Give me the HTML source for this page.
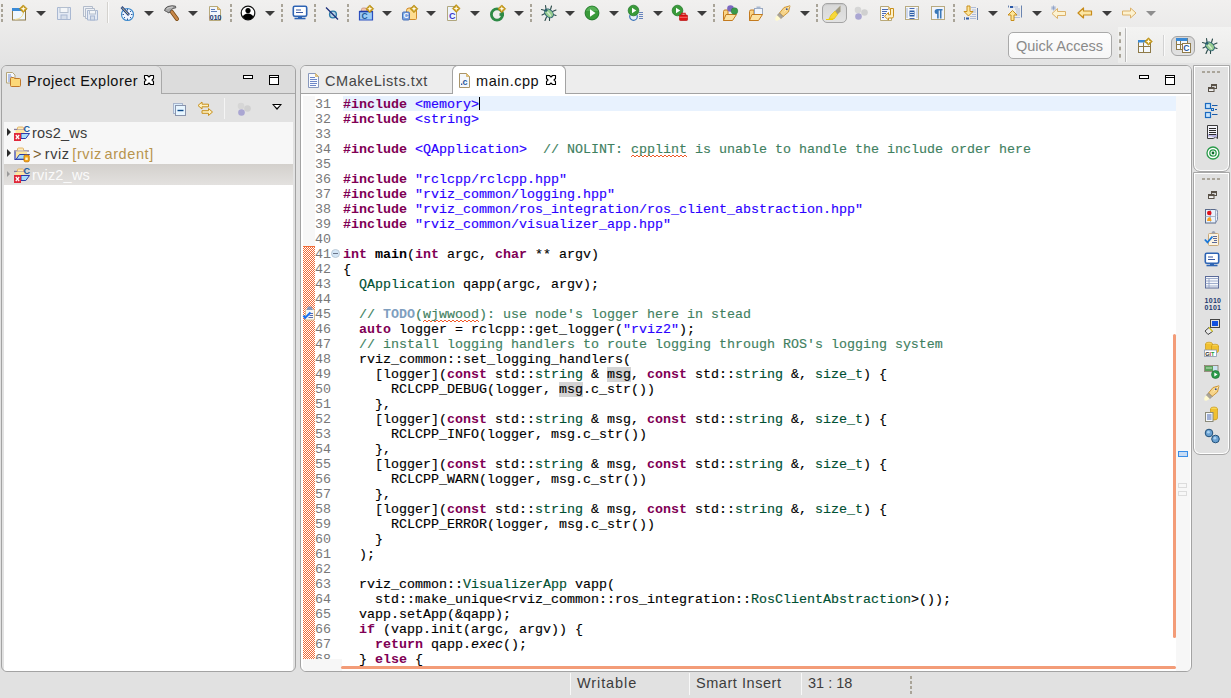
<!DOCTYPE html>
<html><head><meta charset="utf-8">
<style>
*{margin:0;padding:0;box-sizing:border-box}
html,body{width:1231px;height:698px;overflow:hidden}
body{position:relative;background:#e1e1e1;font-family:"Liberation Sans",sans-serif;color:#3c3c3c}
.abs{position:absolute}
.ic{position:absolute;overflow:visible}
.txt{position:absolute;font-size:14.5px;line-height:17px;white-space:pre}
#top{left:0;top:0;width:1231px;height:65px;background:linear-gradient(#f1f0ef,#e3e3e3)}
.panel{position:absolute;border:1px solid #a3a3a3;border-radius:6px;overflow:hidden}
#pe{left:1px;top:65px;width:295px;height:607px;background:#e2e2e2}
#ed{left:300px;top:65px;width:892px;height:607px;background:#fff}
.code{-webkit-text-stroke:0.15px currentColor;position:absolute;left:343px;top:97px;font-family:"Liberation Mono",monospace;font-size:13.333px;line-height:15px;white-space:pre;color:#000}
.ln{position:absolute;left:307px;top:97px;width:24px;height:562px;overflow:hidden;text-align:right;font-family:"Liberation Mono",monospace;font-size:13.333px;line-height:15px;white-space:pre;color:#787878}
.k{color:#7f0055;font-weight:bold;-webkit-text-stroke:0}
.s{color:#2a00ff}
.c{color:#3f7f5f}
.t{color:#005032}
.b{font-weight:bold;-webkit-text-stroke:0}
.i{font-style:italic}
.todo{color:#7f9fbf;font-weight:bold;-webkit-text-stroke:0}
.sp{display:inline-block;height:15px;vertical-align:top;background-image:linear-gradient(90deg,transparent 1px,#f05a28 1px 3px,transparent 3px),linear-gradient(90deg,#f05a28 1px,transparent 1px 3px,#f05a28 3px);background-size:4px 1px,4px 1px;background-position:0 13px,0 14px;background-repeat:repeat-x}
.mk{background:#d4d4d4;display:inline-block;height:15px;vertical-align:top}
.arr{position:absolute;width:0;height:0;border-left:5px solid transparent;border-right:5px solid transparent;border-top:5px solid #3c3c3c}
.dsep{position:absolute;width:2px;background-image:linear-gradient(#aaa59a 0 2px,transparent 2px)}
.min{position:absolute;width:10px;height:4px;border:1px solid #000;background:#fff}
.max{position:absolute;width:10px;height:10px;border:1px solid #000;background:linear-gradient(#fff 0 1px,#000 1px 2px,#fff 2px)}
.vm{position:absolute;width:0;height:0;border-left:5px solid transparent;border-right:5px solid transparent;border-top:6px solid #000}
.vm:after{content:"";position:absolute;left:-3px;top:-5px;border-left:3px solid transparent;border-right:3px solid transparent;border-top:3px solid #fff}
.tri{position:absolute;width:0;height:0;border-top:4px solid transparent;border-bottom:4px solid transparent;border-left:4px solid #2a2a2a}
.fold{position:absolute;width:9px;height:9px;border-radius:50%;border:1px solid #bccbd8;background:#d4e6f6}
.fold:after{content:"";position:absolute;left:1px;top:3px;width:5px;height:1px;background:#6a7488}
</style></head><body>
<div id="top" class="abs"></div>
<div class="dsep" style="left:1px;top:4px;height:18px;background-image:linear-gradient(#a9a498 0 3px,transparent 3px);background-size:2px 5px"></div>
<svg class="ic" style="left:11px;top:5px" width="16" height="16" viewBox="0 0 16 16"><rect x="1.5" y="3.5" width="13" height="11.5" fill="#eef7ff" stroke="#8e7a48"/><rect x="1" y="3" width="10" height="3" fill="#3a8ad6"/><path d="M4 14.5Q11 14 12.5 8" fill="none" stroke="#f3dc8a" stroke-width="1"/><path d="M12.3 -0.10000000000000009L16.2 3.8L12.3 7.699999999999999L8.4 3.8Z" fill="#c89a18" stroke="#b08810" stroke-width="0.6" stroke-linejoin="round"/><path d="M12.3 1.2L13.0 3.0999999999999996L14.899999999999999 3.8L13.0 4.5L12.3 6.3999999999999995L11.600000000000001 4.5L9.700000000000001 3.8L11.600000000000001 3.0999999999999996Z" fill="#fffbe8"/></svg>
<div class="arr" style="left:36px;top:11px;border-top-color:#3c3c3c"></div>
<svg class="ic" style="left:56px;top:5px" width="16" height="16" viewBox="0 0 16 16"><path d="M1.5 2.5h13v12h-13z" fill="#e4eaf4" stroke="#a9b8d2" stroke-linejoin="round"/><rect x="4" y="2.5" width="8" height="5" fill="#f4f6f8" stroke="#b4bfcf"/><rect x="5" y="10" width="6" height="4.5" fill="#d6deea" stroke="#a9b8d2"/></svg>
<svg class="ic" style="left:82px;top:5px" width="16" height="16" viewBox="0 0 16 16"><path d="M1.5 1.5h9v10h-9z" fill="#eef1f6" stroke="#b3bccb"/><path d="M3.5 3.5h9v10h-9z" fill="#eef1f6" stroke="#b3bccb"/><path d="M5.5 5.5h10v9.5h-10z" fill="#e4eaf4" stroke="#a9b8d2"/><rect x="7.5" y="5.5" width="6" height="3.5" fill="#f4f6f8" stroke="#b4bfcf"/><rect x="8.5" y="11" width="4" height="4" fill="#d6deea" stroke="#a9b8d2"/></svg>
<div class="abs" style="left:107px;top:2px;width:1px;height:21px;background:#d4d2ce"></div>
<div class="abs" style="left:108px;top:2px;width:1px;height:21px;background:#fbfbfb"></div>
<svg class="ic" style="left:119px;top:5px" width="16" height="16" viewBox="0 0 16 16"><circle cx="8.5" cy="9.5" r="6" fill="#eef5ff" stroke="#3a88cc" stroke-width="1.1"/><path d="M8.5 4v1.5M8.5 13.5v1.5M3.5 9.5H5M12 9.5h1.5M5 6l1 1M12 6l-1 1M5 13l1-1M12 13l-1-1" stroke="#1f4a8a" stroke-width="0.9"/><path d="M2.5 2L10 10" stroke="#1f3f86" stroke-width="2.6"/><path d="M3 2.5L9.5 9.5" stroke="#e8d88a" stroke-width="0.9"/></svg>
<div class="arr" style="left:144px;top:11px;border-top-color:#3c3c3c"></div>
<svg class="ic" style="left:163px;top:5px" width="16" height="16" viewBox="0 0 16 16"><path d="M8.5 6.5L14 14" stroke="#7a4a14" stroke-width="4" stroke-linecap="round"/><path d="M8.5 6.5L14 14" stroke="#c8884a" stroke-width="2.4" stroke-linecap="round"/><path d="M1.5 5.5Q2 2.5 5 1.5Q9 0.2 12.5 1.2L12.8 2.8Q9.5 3 8.3 4.8L6 8Q3.5 6.5 1.5 5.5Z" fill="#a8a8a8" stroke="#545454" stroke-width="1"/><path d="M4 3.5Q7 2 10 2" stroke="#d8d8d8" stroke-width="0.8" fill="none"/></svg>
<div class="arr" style="left:188px;top:11px;border-top-color:#3c3c3c"></div>
<svg class="ic" style="left:208px;top:5px" width="16" height="16" viewBox="0 0 16 16"><path d="M1.5 1.5h8l3 3v11h-11z" fill="#f2f6fc" stroke="#b7a97a"/><path d="M9.5 1.5v3h3" fill="#e9c77a" stroke="#c9a45c"/><path d="M3 4.5h4M3 6.5h6" stroke="#5c7ab8" stroke-width="1"/><text x="1.6" y="15" font-family="Liberation Sans" font-weight="bold" font-size="7.5" fill="#1c3c74" letter-spacing="-0.3">010</text></svg>
<div class="dsep" style="left:230px;top:4px;height:18px;background-image:linear-gradient(#a9a498 0 3px,transparent 3px);background-size:2px 5px"></div>
<svg class="ic" style="left:240px;top:5px" width="16" height="16" viewBox="0 0 16 16"><circle cx="8" cy="8" r="6.8" fill="#fff" stroke="#111" stroke-width="1.2"/><circle cx="8" cy="5.6" r="2.6" fill="#000"/><path d="M2.6 12Q4 8.5 8 8.5Q12 8.5 13.4 12Q11.5 14.8 8 14.8Q4.5 14.8 2.6 12Z" fill="#000"/></svg>
<div class="arr" style="left:265px;top:11px;border-top-color:#3c3c3c"></div>
<div class="dsep" style="left:281px;top:4px;height:18px;background-image:linear-gradient(#a9a498 0 3px,transparent 3px);background-size:2px 5px"></div>
<svg class="ic" style="left:292px;top:5px" width="16" height="16" viewBox="0 0 16 16"><rect x="1.3" y="1.3" width="13.4" height="10" rx="1.5" fill="#fff" stroke="#2e64b4" stroke-width="1.6"/><path d="M4 5h5M4 7.5h7" stroke="#3b5aa0" stroke-width="1.1"/><path d="M6 11.5h4v1.5h-4z" fill="#2e64b4"/><path d="M2.5 13.5h11" stroke="#2e64b4" stroke-width="1.6"/></svg>
<div class="dsep" style="left:314px;top:4px;height:18px;background-image:linear-gradient(#a9a498 0 3px,transparent 3px);background-size:2px 5px"></div>
<svg class="ic" style="left:324px;top:5px" width="16" height="16" viewBox="0 0 16 16"><circle cx="9" cy="9.5" r="3.4" fill="#b8d4e4" stroke="#2c7ba8" stroke-width="1.4"/><path d="M2 2.5L14 14.5" stroke="#1c2f7a" stroke-width="1.3"/></svg>
<div class="dsep" style="left:347px;top:4px;height:18px;background-image:linear-gradient(#a9a498 0 3px,transparent 3px);background-size:2px 5px"></div>
<svg class="ic" style="left:358px;top:5px" width="16" height="16" viewBox="0 0 16 16"><path d="M3.5 6V4.5q0-1.5 1.5-1.5h2q1.5 0 1.5 1.5V6" fill="#f4c8b0" stroke="#c89080" stroke-width="0.8"/><path d="M1.5 6.5h13v8.5h-13z" fill="#9cccf4" stroke="#2c50c0" stroke-width="1.2"/><path d="M1.5 6.5h13" stroke="#1c3ca8" stroke-width="1.6"/><text x="3.6" y="14" font-family="Liberation Sans" font-weight="bold" font-size="8.5" fill="#1c5a98">C</text><path d="M11.8 -0.10000000000000009L15.700000000000001 3.8L11.8 7.699999999999999L7.9 3.8Z" fill="#c89a18" stroke="#b08810" stroke-width="0.6" stroke-linejoin="round"/><path d="M11.8 1.2L12.5 3.0999999999999996L14.4 3.8L12.5 4.5L11.8 6.3999999999999995L11.100000000000001 4.5L9.200000000000001 3.8L11.100000000000001 3.0999999999999996Z" fill="#fffbe8"/></svg>
<div class="arr" style="left:382px;top:11px;border-top-color:#3c3c3c"></div>
<svg class="ic" style="left:402px;top:5px" width="16" height="16" viewBox="0 0 16 16"><path d="M4.5 5.5q0-2.5 2.5-2.5h2q1.5 0 2 1.5h2.5q1 0 1 1v8q0 1-1 1h-8q-1 0-1-1z" fill="#fddc90" stroke="#d08a2a"/><rect x="0.5" y="7" width="7" height="8" rx="1.2" fill="#7aa2e0" stroke="#4a72b8"/><text x="1.6" y="13.3" font-family="Liberation Sans" font-weight="bold" font-size="7" fill="#fff">C</text><path d="M12 -0.10000000000000009L15.9 3.8L12 7.699999999999999L8.1 3.8Z" fill="#c89a18" stroke="#b08810" stroke-width="0.6" stroke-linejoin="round"/><path d="M12 1.2L12.7 3.0999999999999996L14.6 3.8L12.7 4.5L12 6.3999999999999995L11.3 4.5L9.4 3.8L11.3 3.0999999999999996Z" fill="#fffbe8"/></svg>
<div class="arr" style="left:426px;top:11px;border-top-color:#3c3c3c"></div>
<svg class="ic" style="left:446px;top:5px" width="16" height="16" viewBox="0 0 16 16"><path d="M1.5 1.5h9v14h-9z" fill="#edf4fc" stroke="#b1a77e"/><text x="3" y="13.5" font-family="Liberation Sans" font-weight="bold" font-size="9" fill="#3a3acc">C</text><path d="M10.2 -0.3999999999999999L14.1 3.5L10.2 7.4L6.299999999999999 3.5Z" fill="#c89a18" stroke="#b08810" stroke-width="0.6" stroke-linejoin="round"/><path d="M10.2 0.9000000000000001L10.899999999999999 2.8L12.799999999999999 3.5L10.899999999999999 4.2L10.2 6.1000000000000005L9.5 4.2L7.599999999999999 3.5L9.5 2.8Z" fill="#fffbe8"/></svg>
<div class="arr" style="left:470px;top:11px;border-top-color:#3c3c3c"></div>
<svg class="ic" style="left:490px;top:5px" width="16" height="16" viewBox="0 0 16 16"><circle cx="7" cy="9.5" r="5.6" fill="none" stroke="#2e8a46" stroke-width="2.8"/><path d="M9.5 9.5h4" stroke="#2e8a46" stroke-width="2.8"/><path d="M11 7l3 1.5v2L11 12z" fill="#2e8a46"/><path d="M11.8 -0.10000000000000009L15.700000000000001 3.8L11.8 7.699999999999999L7.9 3.8Z" fill="#c89a18" stroke="#b08810" stroke-width="0.6" stroke-linejoin="round"/><path d="M11.8 1.2L12.5 3.0999999999999996L14.4 3.8L12.5 4.5L11.8 6.3999999999999995L11.100000000000001 4.5L9.200000000000001 3.8L11.100000000000001 3.0999999999999996Z" fill="#fffbe8"/></svg>
<div class="arr" style="left:514px;top:11px;border-top-color:#3c3c3c"></div>
<div class="dsep" style="left:530px;top:4px;height:18px;background-image:linear-gradient(#a9a498 0 3px,transparent 3px);background-size:2px 5px"></div>
<svg class="ic" style="left:541px;top:5px" width="16" height="16" viewBox="0 0 16 16"><path d="M4.5 0.5L5 4M0.5 4.5L4 5.5M1 10L4 8.5M4 15.5L5.5 12M8.5 15.5L8.5 12.5M10.5 1L9.5 4.5M15 5L11.5 6.5M15 10.5L12 9.5" stroke="#2a4a48" stroke-width="1.1" stroke-linecap="round"/><ellipse cx="8" cy="8.3" rx="3.6" ry="5" transform="rotate(-45 8 8.3)" fill="#96cc90" stroke="#2a6070" stroke-width="1"/><path d="M6.5 7L9.5 10.5" stroke="#d4ecd0" stroke-width="1.3" stroke-linecap="round"/><circle cx="5" cy="5.3" r="1.5" fill="#2a6070"/></svg>
<div class="arr" style="left:565px;top:11px;border-top-color:#3c3c3c"></div>
<svg class="ic" style="left:584px;top:5px" width="16" height="16" viewBox="0 0 16 16"><circle cx="8" cy="8" r="6.9" fill="#3a9a3a" stroke="#227a2a" stroke-width="1"/><path d="M2 6Q4 1.5 8 1.5Q12 1.5 14 6" fill="#68c068" opacity="0.6"/><path d="M6 4.2L11.5 8L6 11.8Z" fill="#fff"/></svg>
<div class="arr" style="left:609px;top:11px;border-top-color:#3c3c3c"></div>
<svg class="ic" style="left:628px;top:5px" width="16" height="16" viewBox="0 0 16 16"><circle cx="5.5" cy="11.5" r="3.8" fill="#e8f0fa" stroke="#3a72b8" stroke-width="1.2"/><path d="M11 9.5h4M11 11.5h4M11 13.5h4M11 7.5h4" stroke="#5878b8" stroke-width="0.9"/><circle cx="5.5" cy="5.5" r="5.3" fill="#3a9a3a" stroke="#227a2a" stroke-width="0.8"/><path d="M4 2.8L8.3 5.5L4 8.2Z" fill="#fff"/></svg>
<div class="arr" style="left:653px;top:11px;border-top-color:#3c3c3c"></div>
<svg class="ic" style="left:672px;top:5px" width="16" height="16" viewBox="0 0 16 16"><circle cx="5.5" cy="5.5" r="5.3" fill="#3a9a3a" stroke="#227a2a" stroke-width="0.8"/><path d="M4 2.8L8.3 5.5L4 8.2Z" fill="#fff"/><rect x="7.5" y="10" width="8" height="5.5" rx="0.8" fill="#e01818" stroke="#b00000" stroke-width="0.6"/><rect x="9.8" y="8.3" width="3.4" height="2" fill="none" stroke="#d01010" stroke-width="1"/><path d="M7.5 12.3h8" stroke="#ff9090" stroke-width="0.7"/></svg>
<div class="arr" style="left:697px;top:11px;border-top-color:#3c3c3c"></div>
<div class="dsep" style="left:713px;top:4px;height:18px;background-image:linear-gradient(#a9a498 0 3px,transparent 3px);background-size:2px 5px"></div>
<svg class="ic" style="left:723px;top:5px" width="16" height="16" viewBox="0 0 16 16"><path d="M0.5 6.5q0-1.5 1.5-1.5h3v10.5h-4.5z" fill="#fbd585" stroke="#c37a1e"/><path d="M3 9.5h10.5l-4 6h-9z" fill="#fce2a2" stroke="#c37a1e"/><circle cx="7.5" cy="3.5" r="3.3" fill="#7b68c0"/><circle cx="11.5" cy="6" r="3.3" fill="#3a9a4a" stroke="#2a7a3a" stroke-width="0.5"/></svg>
<svg class="ic" style="left:749px;top:5px" width="16" height="16" viewBox="0 0 16 16"><path d="M0.5 6.5q0-1.5 1.5-1.5h3v10.5h-4.5z" fill="#fbd585" stroke="#c37a1e"/><rect x="5.5" y="3.5" width="8" height="6" fill="#eef4fc" stroke="#9aa8c0"/><rect x="7.5" y="1.5" width="4" height="2" fill="#a8b8d0"/><path d="M3 9.5h10.5l-4 6h-9z" fill="#fce2a2" stroke="#c37a1e"/></svg>
<svg class="ic" style="left:775px;top:5px" width="16" height="16" viewBox="0 0 16 16"><path d="M15 0.8L9 2.5L4.5 8L8 11.5L13.5 7Z" fill="#f6d48a" stroke="#c8902e" stroke-width="0.9" stroke-linejoin="round"/><path d="M9.5 6.5L14.5 1.5" stroke="#fff0c0" stroke-width="0.8"/><circle cx="11.8" cy="4.2" r="0.9" fill="#3050a0"/><path d="M4.5 8L8 11.5L5.8 13.8L2.2 10.3Z" fill="#aaa49a" stroke="#8a8070" stroke-width="0.7"/><path d="M2.2 10.3L5.8 13.8L2.5 15.8L0.5 15.5L0.2 13Z" fill="#fffad0"/></svg>
<div class="arr" style="left:800px;top:11px;border-top-color:#3c3c3c"></div>
<div class="dsep" style="left:816px;top:4px;height:18px;background-image:linear-gradient(#a9a498 0 3px,transparent 3px);background-size:2px 5px"></div>
<div class="abs" style="left:822px;top:3px;width:25px;height:20px;border:1px solid #a4a4a4;border-radius:5px;background:linear-gradient(#d8d8d8,#e2e2e2);box-shadow:inset 0 1px 1px rgba(0,0,0,0.08)"></div>
<svg class="ic" style="left:826px;top:5px" width="16" height="16" viewBox="0 0 16 16"><path d="M9 6L14.5 0.5V6.5L11.5 9.5Z" fill="#a09a80"/><path d="M5 10L9 6L11.5 9.5L8 14H3Z" fill="#f7d83a" stroke="#e0b800" stroke-width="0.6"/><path d="M0 14.5h7" stroke="#f0d000" stroke-width="1"/></svg>
<svg class="ic" style="left:853px;top:5px" width="16" height="16" viewBox="0 0 16 16"><circle cx="5" cy="5" r="3.3" fill="#d6d6d6"/><circle cx="11.5" cy="7.5" r="3.3" fill="#d0d0d0"/><circle cx="5.5" cy="11.5" r="3.3" fill="#aaa6d2"/></svg>
<svg class="ic" style="left:879px;top:5px" width="16" height="16" viewBox="0 0 16 16"><path d="M1.5 1.5h8l3 3v11h-11z" fill="#f6f8fc" stroke="#b8a878"/><path d="M9.5 1.5v3h3z" fill="#e9c77a" stroke="#d0ac60" stroke-width="0.7"/><path d="M3 4.5h6M3 6.5h5M3 8.5h4M3 10.5h2M3 12.5h2" stroke="#4a6ab0" stroke-width="1"/><path d="M11.5 3.5H14.5V11.5Q14.5 13 13 13H9.5V15L5.5 11.3L9.5 7.5V9.8H11.5Z" fill="#fdf0c8" stroke="#c8901c" stroke-width="1" stroke-linejoin="round"/></svg>
<svg class="ic" style="left:904px;top:5px" width="16" height="16" viewBox="0 0 16 16"><rect x="1.5" y="1.5" width="13" height="13" fill="#f4f7fc" stroke="#b8aa80"/><path d="M3 3.5v10M13 3.5v10" stroke="#5a7ab8" stroke-width="1" stroke-dasharray="1 1"/><path d="M5.5 3.5h5M5.5 13.5h5" stroke="#4a6ab0" stroke-width="1"/><rect x="5.5" y="5.5" width="5" height="6" fill="#2c5ea8"/><path d="M6 7.5h4M6 9.5h4" stroke="#fff" stroke-width="0.8"/></svg>
<svg class="ic" style="left:930px;top:5px" width="16" height="16" viewBox="0 0 16 16"><rect x="1.5" y="1.5" width="13" height="13" fill="#f0f4fc" stroke="#b8aa80"/><path d="M6.5 4h6v1.5h-1v8h-1.6v-8h-1.2v8h-1.6v-4.5q-2.5 0-2.5-2.5t2.9-2.5z" fill="#3a78b8"/></svg>
<div class="dsep" style="left:953px;top:4px;height:18px;background-image:linear-gradient(#a9a498 0 3px,transparent 3px);background-size:2px 5px"></div>
<svg class="ic" style="left:963px;top:5px" width="16" height="16" viewBox="0 0 16 16"><path d="M14.5 3v12M1.5 12v3" stroke="#6a84b0" stroke-width="1"/><path d="M8 2.5h5M9 5h4M9 7h4M9 9.5h4M7 11.5h6M7 13.5h6" stroke="#a8b8d8" stroke-width="0.9"/><rect x="3" y="12.5" width="3" height="2" fill="#2c5aa8"/><path d="M4 1h3v5.5h3L5.5 11 1 6.5h3z" fill="#fde59a" stroke="#c88e1a" stroke-width="1"/></svg>
<div class="arr" style="left:988px;top:11px;border-top-color:#3c3c3c"></div>
<svg class="ic" style="left:1007px;top:5px" width="16" height="16" viewBox="0 0 16 16"><path d="M14.5 0.5v12M1.5 0.5v2" stroke="#6a84b0" stroke-width="1"/><path d="M6 2h5M8 4h5M9 6h4M9 8h4M9 10h4M7 12.5h6" stroke="#a8b8d8" stroke-width="0.9"/><rect x="3" y="1" width="3" height="2" fill="#2c5aa8"/><path d="M4 15.5h3v-5.5h3L5.5 5.5 1 10h3z" fill="#fde59a" stroke="#c88e1a" stroke-width="1"/></svg>
<div class="arr" style="left:1032px;top:11px;border-top-color:#3c3c3c"></div>
<svg class="ic" style="left:1051px;top:5px" width="16" height="16" viewBox="0 0 16 16"><path d="M1 8.5L6.5 3.5V6.5H14.5V10.5H6.5V13.5Z" fill="#fdf3d2" stroke="#dcb26a" stroke-width="1" stroke-linejoin="round"/><path d="M2.5 0.5v5M0 3h5M0.8 1.2l3.4 3.6M4.2 1.2L0.8 4.8" stroke="#8aa0c8" stroke-width="0.8"/></svg>
<svg class="ic" style="left:1077px;top:5px" width="16" height="16" viewBox="0 0 16 16"><path d="M1 8L6.5 3V6H14.5V10H6.5V13Z" fill="#fce6a4" stroke="#c88c1a" stroke-width="1.2" stroke-linejoin="round"/></svg>
<div class="arr" style="left:1102px;top:11px;border-top-color:#3c3c3c"></div>
<svg class="ic" style="left:1121px;top:5px" width="16" height="16" viewBox="0 0 16 16"><path d="M15 8L9.5 3V6H1.5V10H9.5V13Z" fill="#fdf2d0" stroke="#dcb26a" stroke-width="1" stroke-linejoin="round"/></svg>
<div class="arr" style="left:1146px;top:11px;border-top-color:#8e8e8e"></div>
<div class="abs" style="left:1008px;top:32px;width:104px;height:27px;border:1px solid #a9a9a9;border-radius:5px;background:linear-gradient(#fdfdfd,#f6f6f6)"></div>
<div class="txt" style="left:1016px;top:38px;font-size:14.5px;color:#8a8a8a">Quick Access</div>
<div class="abs" style="left:1118px;top:27px;width:113px;height:36px;background:linear-gradient(#f3f3f2,#ebebea)"></div>
<div class="dsep" style="left:1119px;top:32px;height:26px;background-image:linear-gradient(#a9a498 0 4px,transparent 4px);background-size:2px 7.33px"></div>
<div class="abs" style="left:1125px;top:28px;width:1px;height:34px;background:#b8b8b8;border-radius:1px"></div>
<div class="abs" style="left:1126px;top:27px;width:1px;height:35px;background:#fafafa"></div>
<svg class="ic" style="left:1137px;top:38px" width="16" height="16" viewBox="0 0 16 16"><rect x="1.5" y="2.5" width="12" height="12" fill="#f4f8fc" stroke="#8e7a48"/><rect x="1" y="2" width="9" height="2.5" fill="#3a8ad6"/><path d="M1.5 8.5h12M6.5 4.5v10" stroke="#8e7a48"/><path d="M11.5 -0.30000000000000027L15.3 3.5L11.5 7.300000000000001L7.699999999999999 3.5Z" fill="#c89a18" stroke="#b08810" stroke-width="0.6" stroke-linejoin="round"/><path d="M11.5 0.9999999999999998L12.2 2.8L14.0 3.5L12.2 4.2L11.5 6.000000000000001L10.8 4.2L9.0 3.5L10.8 2.8Z" fill="#fffbe8"/></svg>
<div class="abs" style="left:1163px;top:35px;width:1px;height:21px;background:#d2d2d2"></div>
<div class="abs" style="left:1164px;top:35px;width:1px;height:21px;background:#fafafa"></div>
<div class="abs" style="left:1171px;top:36px;width:24px;height:20px;border:1px solid #a4a4a4;border-radius:6px;background:linear-gradient(#d6d6d6,#e2e2e2)"></div>
<svg class="ic" style="left:1175px;top:37px" width="16" height="16" viewBox="0 0 16 16"><rect x="1.5" y="1.5" width="11" height="11" fill="#f4f8fc" stroke="#8e7a48"/><rect x="1" y="1" width="11.5" height="3" fill="#3a8ad6"/><path d="M1.5 7.5h11M5.5 4v8.5" stroke="#8e7a48"/><rect x="7.5" y="6.5" width="8" height="9" fill="#fff" stroke="#8e7a48"/><text x="8.3" y="14.3" font-family="Liberation Sans" font-weight="bold" font-size="8.5" fill="#2a5aa0">C</text></svg>
<svg class="ic" style="left:1202px;top:38px" width="16" height="16" viewBox="0 0 16 16"><path d="M4.5 0.5L5 4M0.5 4.5L4 5.5M1 10L4 8.5M4 15.5L5.5 12M8.5 15.5L8.5 12.5M10.5 1L9.5 4.5M15 5L11.5 6.5M15 10.5L12 9.5" stroke="#2a4a48" stroke-width="1.1" stroke-linecap="round"/><ellipse cx="8" cy="8.3" rx="3.6" ry="5" transform="rotate(-45 8 8.3)" fill="#96cc90" stroke="#2a6070" stroke-width="1"/><path d="M6.5 7L9.5 10.5" stroke="#d4ecd0" stroke-width="1.3" stroke-linecap="round"/><circle cx="5" cy="5.3" r="1.5" fill="#2a6070"/></svg>

<!-- Project Explorer -->
<div id="pe" class="panel">
  <div class="abs" style="left:0;top:0;width:293px;height:28px;background:#dcdcdc;border-bottom:1px solid #a8a8a8"></div>
  <div class="abs" style="left:0;top:0;width:160px;height:28px;background:#e2e2e2;border-right:1px solid #a8a8a8;border-top-right-radius:6px"></div>
  <div class="abs" style="left:0;top:27px;width:159px;height:2px;background:#e2e2e2"></div>
  <div class="abs" style="left:2px;top:56px;width:289px;height:550px;background:#fff"></div>
  <div class="abs" style="left:2px;top:56px;width:289px;height:42px;background:#f7f7f7"></div>
  <div class="abs" style="left:2px;top:98px;width:289px;height:21px;background:linear-gradient(#d3d0cc,#e3e1df)"></div>
</div>

<!-- Editor -->
<div id="ed" class="panel">
  <div class="abs" style="left:0;top:0;width:890px;height:28px;background:#ededed;border-bottom:1px solid #a3a3a3"></div>
  <div class="abs" style="left:2px;top:30px;width:12px;height:563px;background:#f7f7f7"></div>
  <div class="abs" style="left:875px;top:30px;width:14px;height:575px;background:#f7f7f7"></div>
  <div class="abs" style="left:2px;top:593px;width:39px;height:12px;background:#f7f7f7"></div>
  <div class="abs" style="left:42px;top:30px;width:833px;height:15px;background:#e8f2fe"></div>
  <div class="abs" style="left:872px;top:268px;width:3px;height:304px;background:#f39c78;border-radius:1.5px"></div>
  <div class="abs" style="left:40px;top:600px;width:835px;height:3px;background:#f39c78;border-radius:1.5px"></div>
  <div class="abs" style="left:877px;top:385px;width:10px;height:6px;border:1px solid #3a8ee8;background:#c8dcf4"></div>
  <div class="abs" style="left:877px;top:417px;width:9px;height:5px;border:1px solid #dcdcdc"></div>
  <div class="abs" style="left:877px;top:425px;width:9px;height:5px;border:1px solid #dcdcdc"></div>
</div>

<div class="abs" style="left:452px;top:65px;width:114px;height:29px;background:#fff;border:1px solid #a3a3a3;border-bottom:none;border-radius:6px 6px 0 0"></div>
<div class="abs" style="left:479px;top:97px;width:1px;height:13px;background:#000"></div>
<!-- right trim stacks -->
<div class="abs" style="left:1193px;top:65px;width:37px;height:107px;border:1px solid #a8a8a8;border-radius:0 0 7px 7px;box-shadow:inset 0 0 0 1px #fff;background:#e1e1e1"></div>
<div class="abs" style="left:1193px;top:172px;width:37px;height:283px;border:1px solid #a8a8a8;border-radius:0 0 7px 7px;box-shadow:inset 0 0 0 1px #fff;background:#e1e1e1"></div>
<div class="abs" style="left:1202px;top:71px;width:20px;height:2px;background-image:linear-gradient(90deg,#aaa59a 0 3px,transparent 3px);background-size:5px 2px"></div>
<div class="abs" style="left:1202px;top:178px;width:20px;height:2px;background-image:linear-gradient(90deg,#aaa59a 0 3px,transparent 3px);background-size:5px 2px"></div>

<div class="ln">31
32
33
34
35
36
37
38
39
40
41
42
43
44
45
46
47
48
49
50
51
52
53
54
55
56
57
58
59
60
61
62
63
64
65
66
67
68</div>

<div class="code"><span class="k">#include</span> <span class="s">&lt;memory&gt;</span>
<span class="k">#include</span> <span class="s">&lt;string&gt;</span>

<span class="k">#include</span> <span class="s">&lt;QApplication&gt;</span>  <span class="c">// NOLINT: <span class="sp">cpplint</span> is unable to handle the include order here</span>

<span class="k">#include</span> <span class="s">"rclcpp/rclcpp.hpp"</span>
<span class="k">#include</span> <span class="s">"rviz_common/logging.hpp"</span>
<span class="k">#include</span> <span class="s">"rviz_common/ros_integration/ros_client_abstraction.hpp"</span>
<span class="k">#include</span> <span class="s">"rviz_common/visualizer_app.hpp"</span>

<span class="k">int</span> <span class="b">main</span>(<span class="k">int</span> argc, <span class="k">char</span> ** argv)
{
  <span class="t">QApplication</span> qapp(argc, argv);

  <span class="c">// <span class="todo">TODO</span>(<span class="sp">wjwwood</span>): use node's logger here in stead</span>
  <span class="k">auto</span> logger = rclcpp::get_logger(<span class="s">"rviz2"</span>);
  <span class="c">// install logging handlers to route logging through ROS's logging system</span>
  rviz_common::set_logging_handlers(
    [logger](<span class="k">const</span> std::<span class="t">string</span> &amp; <span class="mk">msg</span>, <span class="k">const</span> std::<span class="t">string</span> &amp;, <span class="t">size_t</span>) {
      RCLCPP_DEBUG(logger, <span class="mk">msg</span>.c_str())
    },
    [logger](<span class="k">const</span> std::<span class="t">string</span> &amp; msg, <span class="k">const</span> std::<span class="t">string</span> &amp;, <span class="t">size_t</span>) {
      RCLCPP_INFO(logger, msg.c_str())
    },
    [logger](<span class="k">const</span> std::<span class="t">string</span> &amp; msg, <span class="k">const</span> std::<span class="t">string</span> &amp;, <span class="t">size_t</span>) {
      RCLCPP_WARN(logger, msg.c_str())
    },
    [logger](<span class="k">const</span> std::<span class="t">string</span> &amp; msg, <span class="k">const</span> std::<span class="t">string</span> &amp;, <span class="t">size_t</span>) {
      RCLCPP_ERROR(logger, msg.c_str())
    }
  );

  rviz_common::<span class="t">VisualizerApp</span> vapp(
    std::make_unique&lt;rviz_common::ros_integration::<span class="t">RosClientAbstraction</span>&gt;());
  vapp.setApp(&amp;qapp);
  <span class="k">if</span> (vapp.init(argc, argv)) {
    <span class="k">return</span> qapp.<span class="i">exec</span>();
  } <span class="k">else</span> {</div>


<svg class="ic" style="left:5px;top:71px" width="16" height="16" viewBox="0 0 16 16"><path d="M1.5 1.5h6l2.5 2.5v8h-8.5z" fill="#f6f8fc" stroke="#b3a57a"/><path d="M3 4h3M3 6h4M3 8h4M3 10h3" stroke="#6080c8" stroke-width="0.9"/><path d="M5.5 7.5q0-1 1-1h2q1 0 1 1h5q1 0 1 1v6q0 1-1 1h-8q-1 0-1-1z" fill="#fcd878" stroke="#c0782a" stroke-width="1"/></svg>
<div class="txt" style="left:27px;top:73px;color:#101010;letter-spacing:0.5px">Project Explorer</div>
<svg class="ic" style="left:144px;top:75px" width="10" height="10" viewBox="0 0 10 10"><path d="M0.5 0.5H3.5L5 2L6.5 0.5H9.5V3.5L8 5L9.5 6.5V9.5H6.5L5 8L3.5 9.5H0.5V6.5L2 5L0.5 3.5Z" fill="#fff" stroke="#000" stroke-width="1.1" stroke-linejoin="round"/></svg>
<div class="min" style="left:243px;top:75px"></div>
<div class="max" style="left:269px;top:75px"></div>
<svg class="ic" style="left:171px;top:101px" width="16" height="16" viewBox="0 0 16 16"><rect x="2.5" y="2.5" width="9" height="10" fill="#dbeefc" stroke="#a8b4cc"/><rect x="4.5" y="4.5" width="10" height="10" fill="#e8f6ff" stroke="#8a94ac"/><path d="M6.5 9.5h6" stroke="#0e4a8a" stroke-width="1.4"/></svg>
<svg class="ic" style="left:197px;top:101px" width="16" height="16" viewBox="0 0 16 16"><path d="M1 4.5L5 1V3.2H11.5V5.8H5V8Z" fill="#fdf0c0" stroke="#c8901c" stroke-width="1" stroke-linejoin="round"/><path d="M15.5 11L11.5 7.5V9.7H5V12.3H11.5V14.5Z" fill="#fdf0c0" stroke="#c8901c" stroke-width="1" stroke-linejoin="round"/></svg>
<div class="abs" style="left:224px;top:98px;width:1px;height:21px;background:#f4f4f4"></div>
<svg class="ic" style="left:236px;top:101px" width="16" height="16" viewBox="0 0 16 16"><circle cx="5" cy="5" r="3.3" fill="#d6d6d6"/><circle cx="11.5" cy="7.5" r="3.3" fill="#d0d0d0"/><circle cx="5.5" cy="11.5" r="3.3" fill="#aaa6d2"/></svg>
<div class="vm" style="left:272px;top:104px"></div>
<div class="tri" style="left:7px;top:128px"></div>
<svg class="ic" style="left:14px;top:125px" width="16" height="16" viewBox="0 0 16 16"><rect x="0" y="3.8" width="10.5" height="1.3" fill="#8a7c98"/><path d="M3.5 4.5V3q0-1 1-1h4q1 0 1 1v1.5" fill="#fdebb8" stroke="#e2b468" stroke-width="1"/><rect x="1.5" y="5" width="9" height="4" fill="#fde6a0"/><path d="M7 8.5H15.5L11.8 13.5H7Z" fill="#a8dcfa" stroke="#2a3aa8" stroke-width="1"/><rect x="0" y="8" width="7" height="8" fill="#e0283a"/><path d="M1.8 10l3.4 4M5.2 10l-3.4 4" stroke="#fff" stroke-width="1.2"/><text x="9.6" y="7" font-family="Liberation Sans" font-weight="bold" font-size="9" fill="#1a5a9a">C</text></svg>
<div class="txt" style="left:32px;top:125px;color:#3c3c3c;letter-spacing:0.2px">ros2_ws</div>
<div class="tri" style="left:7px;top:149px"></div>
<svg class="ic" style="left:14px;top:146px" width="16" height="16" viewBox="0 0 16 16"><rect x="0" y="4.3" width="15" height="1.3" fill="#8a7c98"/><path d="M3.5 4.5V3q0-1 1-1h4q1 0 1 1v1.5" fill="#fdebb8" stroke="#e2b468" stroke-width="1"/><path d="M1.5 5.5H13V8.3H6L2 12.5Z" fill="#fde6a0"/><path d="M1 5.5V13.5H11" fill="none" stroke="#2a3aa8" stroke-width="1.2"/><path d="M5.5 8.5H15.5L11 13.2H2.2Z" fill="#a8dcfa" stroke="#2a3aa8" stroke-width="1"/><rect x="10" y="9" width="5.2" height="6.8" rx="1.3" fill="#f4a818" stroke="#c87808" stroke-width="0.9"/><rect x="11.3" y="11.5" width="2.4" height="2.5" fill="#fff6d0"/></svg>
<div class="txt" style="left:33px;top:146px;color:#3c3c3c;letter-spacing:0.6px;word-spacing:-2px"><span style="color:#7a6030">&gt;</span> rviz <span style="color:#b8944e">[rviz ardent]</span></div>
<div class="tri" style="left:7px;top:171px;border-top-width:3px;border-bottom-width:3px;border-left-width:3px;border-left-color:#9a9a9a"></div>
<svg class="ic" style="left:14px;top:167px" width="16" height="16" viewBox="0 0 16 16"><rect x="0" y="3.8" width="10.5" height="1.3" fill="#8a7c98"/><path d="M3.5 4.5V3q0-1 1-1h4q1 0 1 1v1.5" fill="#fdebb8" stroke="#e2b468" stroke-width="1"/><rect x="1.5" y="5" width="9" height="4" fill="#fde6a0"/><path d="M7 8.5H15.5L11.8 13.5H7Z" fill="#a8dcfa" stroke="#2a3aa8" stroke-width="1"/><rect x="0" y="8" width="7" height="8" fill="#e0283a"/><path d="M1.8 10l3.4 4M5.2 10l-3.4 4" stroke="#fff" stroke-width="1.2"/><text x="9.6" y="7" font-family="Liberation Sans" font-weight="bold" font-size="9" fill="#1a5a9a">C</text></svg>
<div class="txt" style="left:32px;top:167px;color:#fafafa;letter-spacing:0.2px">rviz2_ws</div>
<svg class="ic" style="left:306px;top:72px" width="16" height="16" viewBox="0 0 16 16"><path d="M2.5 1.5h7l3 3v11h-10z" fill="#f8fafe" stroke="#8898bc"/><path d="M9.5 1.5v3h3z" fill="#e9c77a" stroke="#d0ac60" stroke-width="0.7"/><path d="M4 5.5h5M4 7.5h7M4 9.5h7M4 11.5h7M4 13.5h6" stroke="#4a6ab8" stroke-width="0.8"/></svg>
<div class="txt" style="left:325px;top:73px;color:#454545;letter-spacing:0.55px">CMakeLists.txt</div>
<svg class="ic" style="left:458px;top:72px" width="16" height="16" viewBox="0 0 16 16"><path d="M1.5 1.5h7l3 3v11h-10z" fill="#f4f7fc" stroke="#a8946a"/><path d="M8.5 1.5v3h3z" fill="#e9c77a" stroke="#d0ac60" stroke-width="0.7"/><rect x="3" y="11.5" width="1.3" height="1.5" fill="#2a5aa0"/><text x="4.6" y="13" font-family="Liberation Sans" font-weight="bold" font-size="9" fill="#2a5aa0">c</text></svg>
<div class="txt" style="left:476px;top:73px;color:#101010;letter-spacing:0.55px">main.cpp</div>
<svg class="ic" style="left:546px;top:75px" width="10" height="10" viewBox="0 0 10 10"><path d="M0.5 0.5H3.5L5 2L6.5 0.5H9.5V3.5L8 5L9.5 6.5V9.5H6.5L5 8L3.5 9.5H0.5V6.5L2 5L0.5 3.5Z" fill="#fff" stroke="#000" stroke-width="1.1" stroke-linejoin="round"/></svg>
<div class="min" style="left:1139px;top:75px"></div>
<div class="max" style="left:1165px;top:75px"></div>
<div class="abs" style="left:303px;top:246px;width:12px;height:413px;background-color:#fff;background-image:conic-gradient(#f26a35 25%,#fff 0 50%,#f26a35 0 75%,#fff 0);background-size:2px 2px;border-top:1px solid #f26a35"></div>
<svg class="ic" style="left:303px;top:305px" width="16" height="16" viewBox="0 0 16 16"><rect x="2.5" y="4.5" width="9" height="10.5" rx="1" fill="#f6f6f4" stroke="#d8c090" stroke-width="1"/><path d="M3.5 5L5 1.5H8.5L10 5Z" fill="#8898b8"/><path d="M7 8.5h3M6.5 10.5h3.5M5.5 12.5h4.5" stroke="#5a6aa8" stroke-width="1"/><path d="M0.5 10.5L2 13L7.5 7.5" fill="none" stroke="#1a70f0" stroke-width="2"/></svg>
<div class="fold" style="left:331px;top:249px"></div>
<svg class="ic" style="left:1208px;top:84px" width="9" height="8" viewBox="0 0 9 8"><rect x="3.5" y="0.5" width="5" height="4" fill="#e0e0e0" stroke="#5a5248" stroke-width="1"/><path d="M3.5 1.5h5" stroke="#5a5248" stroke-width="1.2"/><rect x="0.5" y="3.5" width="5.5" height="4" fill="#f0f0f0" stroke="#5a5248" stroke-width="1"/><path d="M0.5 4.5h5.5" stroke="#5a5248" stroke-width="1.2"/></svg>
<svg class="ic" style="left:1204px;top:102px" width="16" height="16" viewBox="0 0 16 16"><rect x="1.5" y="1.5" width="5" height="5" fill="#c8e4fc" stroke="#1a6ac0" stroke-width="1.2"/><rect x="1.5" y="10.5" width="5" height="5" fill="#c8e4fc" stroke="#1a6ac0" stroke-width="1.2"/><rect x="7.5" y="6.5" width="2" height="2" fill="none" stroke="#1a6ac0" stroke-width="1"/><path d="M8 3.5h5.5M11 7.5h2M8 12.5h5.5" stroke="#1a5aa8" stroke-width="1.2"/></svg>
<svg class="ic" style="left:1204px;top:124px" width="16" height="16" viewBox="0 0 16 16"><path d="M3.5 1.5h10v13l-2-1.5l-2 1.5h-6z" fill="#f4f4fa" stroke="#3a3a3a" stroke-width="1"/><path d="M4 10h9v3.5l-1.5-1l-2 1.2l-2-1.2h-3.5z" fill="#b8b4e0"/><path d="M5 4.5h7M5 6.5h7M5 8.5h7M5 10.5h7" stroke="#2a2a2a" stroke-width="1"/></svg>
<svg class="ic" style="left:1205px;top:145px" width="16" height="16" viewBox="0 0 16 16"><circle cx="8" cy="8" r="6" fill="#fff" stroke="#2a9a4a" stroke-width="1.3"/><circle cx="8" cy="8" r="3.2" fill="#fff" stroke="#2a9a4a" stroke-width="1.3"/><circle cx="8" cy="8" r="1.4" fill="#0a6a2a"/></svg>
<svg class="ic" style="left:1208px;top:191px" width="9" height="8" viewBox="0 0 9 8"><rect x="3.5" y="0.5" width="5" height="4" fill="#e0e0e0" stroke="#5a5248" stroke-width="1"/><path d="M3.5 1.5h5" stroke="#5a5248" stroke-width="1.2"/><rect x="0.5" y="3.5" width="5.5" height="4" fill="#f0f0f0" stroke="#5a5248" stroke-width="1"/><path d="M0.5 4.5h5.5" stroke="#5a5248" stroke-width="1.2"/></svg>
<svg class="ic" style="left:1204px;top:208px" width="16" height="16" viewBox="0 0 16 16"><rect x="1.5" y="1.5" width="10" height="13.5" fill="#e8f2fc" stroke="#5a6a8a"/><path d="M11.5 1.5q2.5 0 2 3t0 4q1 3-2 6.5" fill="#eef4fc" stroke="#7a8aa8"/><path d="M1.5 8.5h10M6.5 1.5v13" stroke="#9aa8c0" stroke-width="0.8"/><circle cx="5.3" cy="5" r="2.3" fill="#e0101a"/><path d="M3 13q0-3 2.3-4q2.3 1 2.3 4z" fill="#f8a020"/></svg>
<svg class="ic" style="left:1204px;top:230px" width="16" height="16" viewBox="0 0 16 16"><rect x="4.5" y="3.5" width="10" height="12" rx="1" fill="#fbf3e2" stroke="#c8a878" stroke-width="1"/><path d="M7.5 3.5q0-2.5 2-2.5t2 2.5z" fill="#9aa0b0"/><path d="M9 6.5h4M9 8.5h4M10 10.5h3M8 12.5h5" stroke="#5a6a9a" stroke-width="1"/><path d="M0.8 9.5L3.5 12.3L8.5 6.5" fill="none" stroke="#1a78d8" stroke-width="1.8"/></svg>
<svg class="ic" style="left:1204px;top:252px" width="16" height="16" viewBox="0 0 16 16"><rect x="1.3" y="1.3" width="13.4" height="10" rx="1.5" fill="#fff" stroke="#2e64b4" stroke-width="1.6"/><path d="M4 5h5M4 7.5h7" stroke="#3b5aa0" stroke-width="1.1"/><path d="M6 11.5h4v1.5h-4z" fill="#2e64b4"/><path d="M2.5 13.5h11" stroke="#2e64b4" stroke-width="1.6"/></svg>
<svg class="ic" style="left:1204px;top:274px" width="16" height="16" viewBox="0 0 16 16"><rect x="1.5" y="2.5" width="13" height="11.5" fill="#f6f8fc" stroke="#5a6a98"/><path d="M1.5 4.5h13M1.5 7h13M1.5 9.5h13M1.5 12h13M5 4.5v9.5" stroke="#8a9ac0" stroke-width="0.8"/></svg>
<svg class="ic" style="left:1204px;top:296px" width="16" height="16" viewBox="0 0 16 16"><text x="0.5" y="7" font-family="Liberation Sans" font-weight="bold" font-size="7" fill="#1e3a70" letter-spacing="0.3">1010</text><text x="0.5" y="14" font-family="Liberation Sans" font-weight="bold" font-size="7" fill="#1e3a70" letter-spacing="0.3">0101</text></svg>
<svg class="ic" style="left:1204px;top:319px" width="16" height="16" viewBox="0 0 16 16"><rect x="6.5" y="0.5" width="9" height="8" fill="#e0e0e0" stroke="#444" stroke-width="1"/><rect x="8" y="2" width="6" height="5" fill="#1050e0"/><path d="M1 12L5 8.5L8.5 12.5L4 15.5Z" fill="#e8e8e8" stroke="#333" stroke-width="0.9"/><path d="M5 8.5L8.5 12.5" stroke="#e0d020" stroke-width="1.2"/></svg>
<svg class="ic" style="left:1204px;top:341px" width="16" height="16" viewBox="0 0 16 16"><ellipse cx="5" cy="3" rx="3.5" ry="1.8" fill="#f8d050" stroke="#c89818" stroke-width="0.7"/><path d="M1.5 3v5q0 1.8 3.5 1.8t3.5-1.8v-5" fill="#f0c030" stroke="#c89818" stroke-width="0.7"/><ellipse cx="11" cy="5" rx="3.5" ry="1.8" fill="#f8d050" stroke="#c89818" stroke-width="0.7"/><path d="M7.5 5v5q0 1.8 3.5 1.8t3.5-1.8v-5" fill="#f0c030" stroke="#c89818" stroke-width="0.7"/><rect x="0.5" y="9" width="12" height="6.5" fill="#fff" stroke="#8a9ab0" stroke-width="0.8"/><text x="1.2" y="14.5" font-family="Liberation Sans" font-weight="bold" font-size="5.5" fill="#222">G<tspan fill="#d01818">I</tspan><tspan fill="#1a9a3a">T</tspan></text></svg>
<svg class="ic" style="left:1204px;top:364px" width="16" height="16" viewBox="0 0 16 16"><rect x="0.5" y="1.5" width="13.5" height="6" fill="#cce4f4" stroke="#8a7a6a" stroke-width="0.8"/><rect x="1" y="2" width="8" height="5" fill="#5aa05a"/><path d="M2 4h6" stroke="#d0f0d0" stroke-width="0.9"/><circle cx="11.5" cy="10.5" r="4" fill="#2a9a4a" stroke="#1a6a2a" stroke-width="0.6"/><path d="M10.3 8.5L13.5 10.5L10.3 12.5Z" fill="#fff"/></svg>
<svg class="ic" style="left:1204px;top:385px" width="16" height="16" viewBox="0 0 16 16"><path d="M15 0.8L9 2.5L4.5 8L8 11.5L13.5 7Z" fill="#f6d48a" stroke="#c8902e" stroke-width="0.9" stroke-linejoin="round"/><path d="M9.5 6.5L14.5 1.5" stroke="#fff0c0" stroke-width="0.8"/><circle cx="11.8" cy="4.2" r="0.9" fill="#3050a0"/><path d="M4.5 8L8 11.5L5.8 13.8L2.2 10.3Z" fill="#aaa49a" stroke="#8a8070" stroke-width="0.7"/><path d="M2.2 10.3L5.8 13.8L2.5 15.8L0.5 15.5L0.2 13Z" fill="#fffad0"/></svg>
<svg class="ic" style="left:1204px;top:406px" width="16" height="16" viewBox="0 0 16 16"><ellipse cx="10" cy="3" rx="3.5" ry="2" fill="#f8d858" stroke="#c89818" stroke-width="0.7"/><path d="M6.5 3v9q0 2 3.5 2t3.5-2v-9" fill="#f0c030" stroke="#c89818" stroke-width="0.7"/><rect x="1.5" y="6.5" width="7.5" height="9" fill="#f4f7fc" stroke="#8a8a7a"/><path d="M3 9h4.5M3 11h4.5M3 13h4.5" stroke="#3a5aa8" stroke-width="0.9"/></svg>
<svg class="ic" style="left:1204px;top:428px" width="16" height="16" viewBox="0 0 16 16"><circle cx="5" cy="5" r="3.8" fill="#6aa0d0" stroke="#20507a" stroke-width="1"/><circle cx="11.5" cy="11" r="3.8" fill="#6aa0d0" stroke="#20507a" stroke-width="1"/><circle cx="4.4" cy="4.2" r="1.4" fill="#a8d0f0"/><circle cx="10.9" cy="10.2" r="1.4" fill="#a8d0f0"/></svg>
<div class="abs" style="left:570px;top:673px;width:1px;height:22px;background:#f8f8f8"></div>
<div class="abs" style="left:689px;top:673px;width:1px;height:22px;background:#f8f8f8"></div>
<div class="abs" style="left:801px;top:673px;width:1px;height:22px;background:#f8f8f8"></div>
<div class="dsep" style="left:910px;top:676px;height:19px;background-image:linear-gradient(#a9a498 0 3px,transparent 3px);background-size:2px 5px"></div>
<div class="txt" style="left:577px;top:675px;letter-spacing:0.9px">Writable</div>
<div class="txt" style="left:696px;top:675px;letter-spacing:0.55px">Smart Insert</div>
<div class="txt" style="left:808px;top:675px;letter-spacing:0px">31 : 18</div>
</body></html>
